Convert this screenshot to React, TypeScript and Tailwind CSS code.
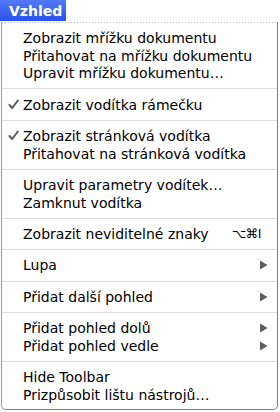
import React from 'react';

type Item = {
  label: string;
  checked?: boolean;
  shortcut?: string;
  submenu?: boolean;
};

const sections: Item[][] = [
  [
    { label: 'Zobrazit mřížku dokumentu' },
    { label: 'Přitahovat na mřížku dokumentu' },
    { label: 'Upravit mřížku dokumentu…' },
  ],
  [{ label: 'Zobrazit vodítka rámečku', checked: true }],
  [
    { label: 'Zobrazit stránková vodítka', checked: true },
    { label: 'Přitahovat na stránková vodítka' },
  ],
  [{ label: 'Upravit parametry vodítek…' }, { label: 'Zamknut vodítka' }],
  [{ label: 'Zobrazit neviditelné znaky', shortcut: '⌥⌘I' }],
  [{ label: 'Lupa', submenu: true }],
  [{ label: 'Přidat další pohled', submenu: true }],
  [
    { label: 'Přidat pohled dolů', submenu: true },
    { label: 'Přidat pohled vedle', submenu: true },
  ],
  [{ label: 'Hide Toolbar' }, { label: 'Prizpůsobit lištu nástrojů…' }],
];

const Check = () => (
  <svg width="11" height="11" viewBox="0 0 11 11">
    <path d="M1.5 6 L4.2 9 L9.8 1.5" fill="none" stroke="#5a5a5a" strokeWidth="2" strokeLinecap="round" strokeLinejoin="round" />
  </svg>
);

const Arrow = () => (
  <svg width="8" height="10" viewBox="0 0 8 10">
    <path d="M0 0.5 L7.5 5 L0 9.5 Z" fill="#5c5c5c" />
  </svg>
);

const Row: React.FC<{ item: Item }> = ({ item }) => (
  <div className="h-[17.7px] flex items-center">
    <div className="w-[21px] pl-[6px] flex items-center">{item.checked && <Check />}</div>
    <span className="flex-1 whitespace-nowrap">{item.label}</span>
    {item.shortcut && (
      <span className="mr-[16px] whitespace-nowrap text-[12.5px] tracking-[-0.5px]">{item.shortcut}</span>
    )}
    {item.submenu && (
      <div className="mr-[9px] flex items-center">
        <Arrow />
      </div>
    )}
  </div>
);

export default function App() {
  return (
    <div className="w-[280px] h-[412px] bg-white overflow-hidden font-['DejaVu_Sans',sans-serif] text-[14px] text-black leading-none">
      <div className="flex h-[21px]">
        <div className="w-[66px] bg-gradient-to-b from-[#5379f8] to-[#2a50ea] text-white font-bold text-[14px] flex items-center pl-[9px]">
          Vzhled
        </div>
      </div>
      <div className="ml-[1px] w-[277px] border-l border-r border-b border-l-[#9a9a9a] border-r-[#7e7e7e] border-b-[#808080] rounded-b-[5px] pb-[5px]">
        <div className="mt-[1px] h-px bg-[repeating-linear-gradient(90deg,#c4c4c4_0_1px,transparent_1px_3px)]" />
        <div className="h-[6px]" />
        {sections.map((section, i) => (
          <div key={i}>
            {i > 0 && (
              <div className="h-[13.7px] flex items-center">
                <div className="h-px w-full bg-[#dcdcdc]" />
              </div>
            )}
            {section.map((item) => (
              <Row key={item.label} item={item} />
            ))}
          </div>
        ))}
      </div>
    </div>
  );
}
